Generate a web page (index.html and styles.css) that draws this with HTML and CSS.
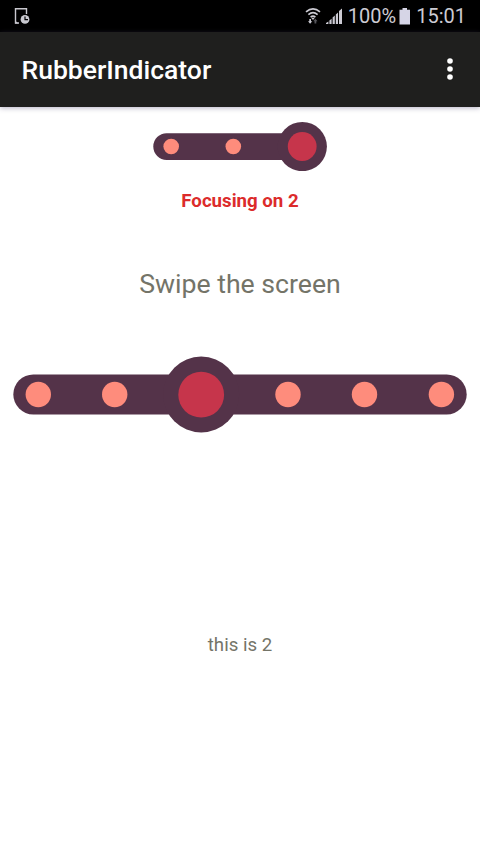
FILE: index.html
```html
<!DOCTYPE html>
<html lang="en">
<head>
<meta charset="utf-8">
<title>RubberIndicator</title>
<link rel="stylesheet" href="styles.css">
</head>
<body>
<div class="status">
  <svg class="status-note" width="17" height="18" viewBox="0 0 17 18">
    <path d="M5 16H1.5V1.8H12.5V7" fill="none" stroke="#c9c8cf" stroke-width="1.4"/>
    <path d="M1 16.5V13.5L4.5 16.5Z" fill="#c9c8cf"/>
    <circle cx="11" cy="12.4" r="4.4" fill="#c9c8cf"/>
    <path d="M11 9.5V12.6H14" fill="none" stroke="#000" stroke-width="1.2"/>
  </svg>
  <svg class="status-wifi" width="16" height="18" viewBox="0 0 16 18">
    <g fill="none" stroke="#cccbd3" stroke-width="1.6">
      <path d="M1 4.8Q8 -1.2 15 4.8"/>
      <path d="M3.4 7.6Q8 3.6 12.6 7.6"/>
      <path d="M5.6 10.1Q8 8 10.4 10.1"/>
    </g>
    <path d="M8 13L6.2 10.8H9.8Z" fill="#cccbd3"/>
    <path d="M4.3 12H6V14.3H7.3L5.1 16.8L3 14.3H4.3Z" fill="#cccbd3"/>
    <path d="M9.5 16.5V14.2H8.3L10.4 11.8L12.5 14.2H11.3V16.5Z" fill="#55555a"/>
  </svg>
  <svg class="status-signal" width="17" height="17" viewBox="0 0 17 17">
    <path d="M0 16V15L2.4 13.6V16ZM3.4 16V12.4L5.6 10.8V16ZM6.6 16V9.4L8.8 7.6V16ZM9.8 16V6.4L12 4.4V16ZM13 16V3L16 .4V16Z" fill="#cccbd3"/>
  </svg>
  <span class="status-percent">100%</span>
  <svg class="status-battery" width="12" height="17" viewBox="0 0 12 17">
    <path d="M3.5 0H8V1.7H11V16.5H.5V1.7H3.5Z" fill="#d6d5e6"/>
  </svg>
  <span class="status-time">15:01</span>
</div>
<header class="bar">
  <h1 class="bar-title">RubberIndicator</h1>
  <svg class="bar-menu" width="6" height="22" viewBox="0 0 6 22" fill="#fff">
    <circle cx="3" cy="3" r="2.8"/><circle cx="3" cy="11" r="2.8"/><circle cx="3" cy="19" r="2.8"/>
  </svg>
</header>
<main class="content">
  <svg class="indicator-small" width="480" height="50" viewBox="0 121 480 50">
    <g class="track"><rect x="153.3" y="133.2" width="148" height="26.7" rx="13.35"/><circle cx="302.3" cy="146.6" r="24.6"/></g>
    <g class="dot"><circle cx="171.2" cy="146.5" r="7.8"/><circle cx="233.3" cy="146.5" r="7.8"/></g>
    <circle class="focus" cx="302.2" cy="146.5" r="14.4"/>
  </svg>
  <p class="focus-text">Focusing on 2</p>
  <p class="hint">Swipe the screen</p>
  <svg class="indicator-large" width="480" height="78" viewBox="0 356 480 78">
    <g class="track"><rect x="13.3" y="374.4" width="453.4" height="40" rx="20"/><circle cx="201.2" cy="394.5" r="38"/></g>
    <g class="dot"><circle cx="38.3" cy="394.5" r="12.7"/><circle cx="114.7" cy="394.5" r="12.7"/><circle cx="288" cy="394.5" r="12.7"/><circle cx="364.5" cy="394.5" r="12.7"/><circle cx="441.4" cy="394.5" r="12.7"/></g>
    <circle class="focus" cx="201.2" cy="394.7" r="22.9"/>
  </svg>
  <p class="page-text">this is 2</p>
</main>
</body>
</html>
```
FILE: styles.css
```css
body {
  margin: 0;
  height: 853px;
  overflow: hidden;
  background: #fff;
  font-family: Roboto, sans-serif;
}
h1, p { margin: 0; }
svg { display: block; flex: none; }
.status {
  box-sizing: border-box;
  height: 32px;
  padding: 0 14px;
  display: flex;
  align-items: center;
  background: #000;
  color: #cccbd3;
  font-size: 20px;
  line-height: 32px;
}
.status-wifi { margin-left: auto; }
.status-signal { margin-left: 5px; }
.status-percent { margin-left: 5px; }
.status-battery { margin-left: 3px; }
.status-time { margin-left: 5px; }
.bar {
  box-sizing: border-box;
  height: 74.5px;
  padding: 0 27px 0 21.5px;
  display: flex;
  align-items: center;
  justify-content: space-between;
  background: #1f1f1e;
  box-shadow: 0 1px 5px rgba(70, 60, 110, .4);
}
.bar-title {
  padding-top: 2px;
  color: #fff;
  font-size: 26.5px;
  font-weight: 500;
  line-height: 34px;
}
.content {
  display: flex;
  flex-direction: column;
  align-items: center;
  padding-top: 14.5px;
}
.track { fill: #543349; }
.dot { fill: #fe8c7c; }
.focus { fill: #c6354b; }
.focus-text {
  margin-top: 19px;
  color: #dc2b2b;
  font-size: 18.67px;
  font-weight: 700;
  line-height: 22px;
}
.hint {
  margin-top: 56px;
  color: #747468;
  font-size: 26.67px;
  line-height: 32px;
}
.indicator-large { margin-top: 56px; }
.page-text {
  margin-top: 200px;
  color: #747468;
  font-size: 18.67px;
  line-height: 22px;
}
```
